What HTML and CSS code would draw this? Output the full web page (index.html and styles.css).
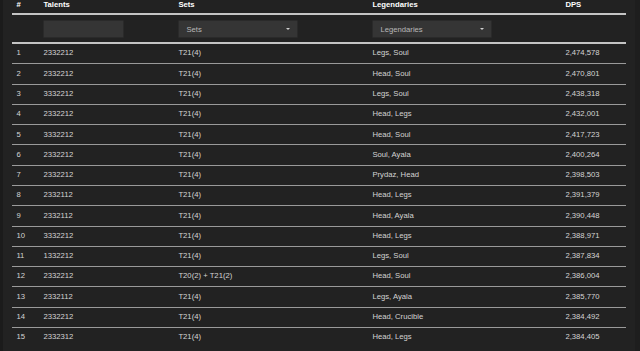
FILE: index.html
```html
<!DOCTYPE html>
<html>
<head>
<meta charset="utf-8">
<link rel="stylesheet" href="styles.css">
</head>
<body>
<div class="page">
<table class="results">
<colgroup>
<col class="c-num"><col class="c-tal"><col class="c-set"><col class="c-leg"><col class="c-dps">
</colgroup>
<thead>
<tr class="head"><th>#</th><th>Talents</th><th>Sets</th><th>Legendaries</th><th>DPS</th></tr>
<tr class="filters">
<th></th>
<th><div class="input input-talents"></div></th>
<th><div class="input select"><span>Sets</span><span class="caret"></span></div></th>
<th><div class="input select"><span>Legendaries</span><span class="caret"></span></div></th>
<th></th>
</tr>
</thead>
<tbody>
<tr><td>1</td><td>2332212</td><td>T21(4)</td><td>Legs, Soul</td><td>2,474,578</td></tr>
<tr><td>2</td><td>2332212</td><td>T21(4)</td><td>Head, Soul</td><td>2,470,801</td></tr>
<tr><td>3</td><td>3332212</td><td>T21(4)</td><td>Legs, Soul</td><td>2,438,318</td></tr>
<tr><td>4</td><td>2332212</td><td>T21(4)</td><td>Head, Legs</td><td>2,432,001</td></tr>
<tr><td>5</td><td>3332212</td><td>T21(4)</td><td>Head, Soul</td><td>2,417,723</td></tr>
<tr><td>6</td><td>2332212</td><td>T21(4)</td><td>Soul, Ayala</td><td>2,400,264</td></tr>
<tr><td>7</td><td>2332212</td><td>T21(4)</td><td>Prydaz, Head</td><td>2,398,503</td></tr>
<tr><td>8</td><td>2332112</td><td>T21(4)</td><td>Head, Legs</td><td>2,391,379</td></tr>
<tr><td>9</td><td>2332112</td><td>T21(4)</td><td>Head, Ayala</td><td>2,390,448</td></tr>
<tr><td>10</td><td>3332212</td><td>T21(4)</td><td>Head, Legs</td><td>2,388,971</td></tr>
<tr><td>11</td><td>1332212</td><td>T21(4)</td><td>Legs, Soul</td><td>2,387,834</td></tr>
<tr><td>12</td><td>2332212</td><td>T20(2) + T21(2)</td><td>Head, Soul</td><td>2,386,004</td></tr>
<tr><td>13</td><td>2332112</td><td>T21(4)</td><td>Legs, Ayala</td><td>2,385,770</td></tr>
<tr><td>14</td><td>2332212</td><td>T21(4)</td><td>Head, Crucible</td><td>2,384,492</td></tr>
<tr><td>15</td><td>2332312</td><td>T21(4)</td><td>Head, Legs</td><td>2,384,405</td></tr>
</tbody>
</table>
</div>
</body>
</html>
```

FILE: styles.css
```css
html, body {
  margin: 0;
  padding: 0;
  background: #222222;
  height: 100%;
  overflow: hidden;
}
body {
  font-family: "Liberation Sans", Arial, sans-serif;
  color: #d4d4d4;
  border-left: 3px solid #1b1b1b;
  box-sizing: border-box;
}
.page {
  display: flex;
  padding-left: 9px;
  width: 623px;
  height: 100%;
  border-right: 9px solid #1e1e1e;
}
.results {
  width: 614px;
  table-layout: fixed;
  border-collapse: collapse;
  font-size: 7.7px;
  align-self: flex-start;
}
.c-num { width: 27px; }
.c-tal { width: 135px; }
.c-set { width: 194px; }
.c-leg { width: 193px; }
.c-dps { width: 65px; }

.results th, .results td {
  text-align: left;
  padding: 0 4.4px;
  white-space: nowrap;
}
.results .head th {
  color: #ffffff;
  font-weight: bold;
  line-height: 10px;
  padding-top: 0;
  padding-bottom: 3px;
  border-bottom: 2px solid #c4c4c4;
}
.results .filters th {
  padding-top: 5px;
  padding-bottom: 4px;
  border-bottom: 2px solid #c4c4c4;
  font-weight: normal;
}
.input {
  box-sizing: border-box;
  height: 18px;
  background: #353535;
  border: 1px solid #2a2a2a;
  border-radius: 1px;
}
.input-talents { width: 81px; }
.select {
  width: 120px;
  display: flex;
  align-items: center;
  justify-content: space-between;
  padding: 0 7px 0 7px;
  color: #b8b8b8;
  font-size: 7.7px;
}
.caret {
  width: 0;
  height: 0;
  border-left: 2.5px solid transparent;
  border-right: 2.5px solid transparent;
  border-top: 2.5px solid #cfcfcf;
}
.results tbody td {
  line-height: 10.5px;
  padding-top: 4.4px;
  padding-bottom: 4.4px;
  border-top: 1px solid #9a9a9a;
}
.results tbody tr:first-child td {
  border-top: none;
}
```
